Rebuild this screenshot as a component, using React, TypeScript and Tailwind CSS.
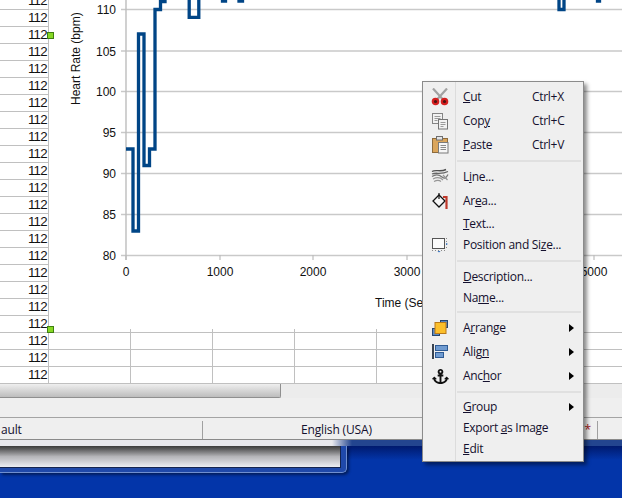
import { FaAnchor } from "react-icons/fa";

const SANS = "font-['Liberation_Sans',Arial,sans-serif]";
const UI = "font-['Open_Sans','Noto_Sans',sans-serif]";

const sheetRows = Array.from({ length: 23 }, (_, i) => i);
const cellCols = [0, 1, 2, 3, 4, 5, 6];

const LINE_PATH =
  "M126,149 H133 V231 H138.5 V34 H144 V165.5 H149.5 V149 H155 V9.5 H160.5 V1.5 H165 V-10 H189.2 V17.3 H198.8 V-10 H222.5 V1 H225.5 V-10 H239 V1 H242.5 V-10 H559 V9.5 H564 V-10 H597.5 V1 H599.5 V-10";

function Chart() {
  const yTicks = [
    { label: "110", y: 9.5 },
    { label: "105", y: 51 },
    { label: "100", y: 91.5 },
    { label: "95", y: 132.5 },
    { label: "90", y: 173.5 },
    { label: "85", y: 214.5 },
    { label: "80", y: 255.5 },
  ];
  const xTicks = [
    { label: "0", x: 126 },
    { label: "1000", x: 220 },
    { label: "2000", x: 313 },
    { label: "3000", x: 407 },
    { label: "5000", x: 594 },
  ];
  return (
    <svg width="573" height="329" viewBox="49 0 573 329" className="block shrink-0">
      {yTicks.map((t) => (
        <g key={t.label}>
          <line x1="121" x2="622" y1={t.y} y2={t.y} stroke="#c9c9c9" strokeWidth="1.4" />
          <text x="116" y={t.y + 4.5} textAnchor="end" fontSize="12" fontFamily="Liberation Sans" fill="#111">
            {t.label}
          </text>
        </g>
      ))}
      <line x1="126" x2="126" y1="0" y2="260" stroke="#bdbdbd" strokeWidth="1.4" />
      {xTicks.map((t) => (
        <g key={t.label}>
          <line x1={t.x} x2={t.x} y1="255" y2="260" stroke="#bdbdbd" strokeWidth="1.2" />
          <text x={t.x} y="276" textAnchor="middle" fontSize="12" fontFamily="Liberation Sans" fill="#111">
            {t.label}
          </text>
        </g>
      ))}
      <text x="375" y="307" fontSize="12" fontFamily="Liberation Sans" fill="#111">
        Time (Seconds)
      </text>
      <text
        transform="translate(80,105) rotate(-90)"
        fontSize="12"
        fontFamily="Liberation Sans"
        fill="#111"
      >
        Heart Rate (bpm)
      </text>
      <path d={LINE_PATH} fill="none" stroke="#004586" strokeWidth="3.3" strokeLinejoin="miter" />
    </svg>
  );
}

function ScissorsIcon() {
  return (
    <svg width="18" height="18" viewBox="0 0 18 18">
      <path d="M2 0.5 L11.5 11 M16 0.5 L6.5 11" stroke="#a2a2a2" strokeWidth="2.2" fill="none" />
      <circle cx="4.5" cy="13.5" r="2.7" fill="#4a1212" stroke="#d41f1f" strokeWidth="2.2" />
      <circle cx="13.5" cy="13.5" r="2.7" fill="#4a1212" stroke="#d41f1f" strokeWidth="2.2" />
    </svg>
  );
}

function CopyIcon() {
  return (
    <svg width="18" height="18" viewBox="0 0 18 18">
      <rect x="1.5" y="1.5" width="10" height="10" fill="#f2f2f2" stroke="#858585" />
      <path d="M3.5 4.5 H9.5 M3.5 6.5 H9.5 M3.5 8.5 H6.5" stroke="#9a9a9a" />
      <rect x="7.5" y="7.5" width="9" height="9.5" fill="#f2f2f2" stroke="#757575" />
      <path d="M9.5 10.5 H14.5 M9.5 12.5 H14.5 M9.5 14.5 H12.5" stroke="#9a9a9a" />
    </svg>
  );
}

function PasteIcon() {
  return (
    <svg width="18" height="18" viewBox="0 0 18 18">
      <rect x="1.5" y="2.5" width="15" height="14" fill="#dba65c" stroke="#8d6b3c" />
      <rect x="5.5" y="0.5" width="6" height="3.5" fill="#e4e4e4" stroke="#6f6f6f" />
      <rect x="7.5" y="6.5" width="9.5" height="10.5" fill="#f6f6f6" stroke="#7a7a7a" />
      <path d="M9.5 9.5 H15 M9.5 11.5 H15 M9.5 13.5 H15" stroke="#8a8a8a" />
    </svg>
  );
}

function LineIcon() {
  return (
    <svg width="18" height="18" viewBox="0 0 18 18">
      <path d="M1 3.5 C5 1 9 4.5 15 1.5" stroke="#4f4f4f" strokeWidth="1.4" fill="none" />
      <path d="M1 6 C5 4 10 7 17 3.5" stroke="#666" strokeWidth="1.3" fill="none" />
      <path d="M1 8.5 C4 6.5 8 6.5 11 9 S15 10 17 6.5" stroke="#777" strokeWidth="1.3" fill="none" />
      <path d="M2 11 C6 9 9 9 12 12 M12 7 L16.5 12 M3 13.5 C6 12 8 12 10 13.5" stroke="#969696" strokeWidth="1.2" fill="none" />
    </svg>
  );
}

function AreaIcon() {
  return (
    <svg width="18" height="18" viewBox="0 0 18 18">
      <path d="M8 3 L14 9 L8 15 L2 9 Z" fill="#f7f7f7" stroke="#111" strokeWidth="1.3" />
      <path d="M8 7 V1" stroke="#111" strokeWidth="1.2" />
      <path d="M12 5 H15.5 V17" fill="none" stroke="#c0392b" strokeWidth="2.2" />
    </svg>
  );
}

function PositionIcon() {
  return (
    <svg width="18" height="18" viewBox="0 0 18 18">
      <rect x="1.5" y="2.5" width="12" height="10" fill="#fbfbfb" stroke="#555" />
      <path d="M15.5 2 V13" stroke="#8a8a8a" strokeDasharray="1 2" />
      <path d="M1 14.5 H14" stroke="#8a8a8a" strokeDasharray="1 2" />
      <path d="M15 7 L17 8 L15 9 Z M6.5 15 H9.5 L8 16.5 Z" fill="#2f6fc0" />
    </svg>
  );
}

function ArrangeIcon() {
  return (
    <svg width="18" height="18" viewBox="0 0 18 18">
      <rect x="1.5" y="9.5" width="7" height="7" fill="#5c8ac2" stroke="#26466f" />
      <rect x="9.5" y="1.5" width="7" height="7" fill="#5c8ac2" stroke="#26466f" />
      <rect x="4" y="3.5" width="11" height="11" fill="#fbbf2b" stroke="#b9791a" />
    </svg>
  );
}

function AlignIcon() {
  return (
    <svg width="18" height="18" viewBox="0 0 18 18">
      <rect x="1" y="1" width="2" height="15" fill="#38424f" />
      <rect x="4.5" y="2.5" width="12" height="5" fill="#6f9bd1" stroke="#2f5b94" />
      <rect x="4.5" y="9.5" width="8" height="5" fill="#6f9bd1" stroke="#2f5b94" />
    </svg>
  );
}

function Arrow() {
  return <span className="ml-auto mr-[9px] h-0 w-0 border-y-[4px] border-l-[5px] border-y-transparent border-l-black" />;
}

function MenuItem({
  icon,
  shortcut,
  arrow,
  h,
  children,
}: {
  icon?: React.ReactNode;
  shortcut?: string;
  arrow?: boolean;
  h: string;
  children: React.ReactNode;
}) {
  return (
    <div className={`flex items-center ${h}`}>
      <span className="flex w-[33px] shrink-0 justify-center pl-px">{icon}</span>
      <span className="ml-[7px] whitespace-nowrap">{children}</span>
      {shortcut && <span className="absolute left-[109px] whitespace-nowrap">{shortcut}</span>}
      {arrow && <Arrow />}
    </div>
  );
}

function Separator({ h }: { h: string }) {
  return (
    <div className={`flex items-center ${h}`}>
      <div className="ml-[34px] mr-[2px] h-[2px] flex-1 bg-[#e0e0e0]" />
    </div>
  );
}

function ContextMenu() {
  return (
    <div
      className={`absolute left-[422px] top-[81px] h-[381px] w-[162px] border border-[#8b8b8b] bg-[#efefef] pt-[3px] text-[12px] leading-none tracking-[-0.3px] text-[#14102e] shadow-[3px_3px_4px_rgba(0,0,0,0.45)] ${UI}`}
    >
      <div className="absolute bottom-0 left-[32px] top-0 w-[1px] bg-[#dcdcdc]" />
      <div className="relative">
        <MenuItem h="h-[24px]" icon={<ScissorsIcon />} shortcut="Ctrl+X">
          <u>C</u>ut
        </MenuItem>
        <MenuItem h="h-[24px]" icon={<CopyIcon />} shortcut="Ctrl+C">
          Cop<u>y</u>
        </MenuItem>
        <MenuItem h="h-[24px]" icon={<PasteIcon />} shortcut="Ctrl+V">
          <u>P</u>aste
        </MenuItem>
        <Separator h="h-[8px]" />
        <MenuItem h="h-[24px]" icon={<LineIcon />}>
          L<u>i</u>ne...
        </MenuItem>
        <MenuItem h="h-[24px]" icon={<AreaIcon />}>
          Ar<u>e</u>a...
        </MenuItem>
        <MenuItem h="h-[21px]">
          <u>T</u>ext...
        </MenuItem>
        <MenuItem h="h-[22px]" icon={<PositionIcon />}>
          Position and Si<u>z</u>e...
        </MenuItem>
        <Separator h="h-[10px]" />
        <MenuItem h="h-[21px]">
          <u>D</u>escription...
        </MenuItem>
        <MenuItem h="h-[21px]">
          Na<u>m</u>e...
        </MenuItem>
        <Separator h="h-[8px]" />
        <MenuItem h="h-[24px]" icon={<ArrangeIcon />} arrow>
          A<u>r</u>range
        </MenuItem>
        <MenuItem h="h-[24px]" icon={<AlignIcon />} arrow>
          Alig<u>n</u>
        </MenuItem>
        <MenuItem h="h-[24px]" icon={<FaAnchor size={17} color="#111" />} arrow>
          Anc<u>h</u>or
        </MenuItem>
        <Separator h="h-[8px]" />
        <MenuItem h="h-[21px]" arrow>
          <u>G</u>roup
        </MenuItem>
        <MenuItem h="h-[21px]">
          Export <u>a</u>s Image
        </MenuItem>
        <MenuItem h="h-[21px]">
          <u>E</u>dit
        </MenuItem>
      </div>
    </div>
  );
}

function Handle({ className }: { className: string }) {
  return <div className={`absolute h-[7px] w-[7px] border border-[#3f7f10] bg-[#86d824] ${className}`} />;
}

export default function App() {
  return (
    <div className="relative h-[498px] w-[622px] overflow-hidden bg-[#0335a9]">
      <div className="flex h-[446px] flex-col bg-[#efefef]">
        {/* sheet + chart */}
        <div className="flex h-[384px] overflow-hidden bg-white">
          <div className={`-mt-[7px] w-[49px] shrink-0 text-[13.3px] tracking-[-0.7px] text-[#111] ${SANS}`}>
            {sheetRows.map((i) => (
              <div
                key={i}
                className="flex h-[17px] items-center justify-end border-r border-b border-[#c0c0c0] pr-px leading-none"
              >
                112
              </div>
            ))}
          </div>
          <div className="flex-1">
            <Chart />
            {["h-[4px]", "h-[17px]", "h-[17px]", "h-[17px]"].map((h, r) => (
              <div key={r} className={`flex border-b border-[#c0c0c0] ${h}`}>
                {cellCols.map((c) => (
                  <div key={c} className="w-[82px] shrink-0 border-r border-[#c0c0c0]" />
                ))}
              </div>
            ))}
          </div>
        </div>

        {/* horizontal scrollbar */}
        <div className="h-[14px] bg-[#ececec]">
          <div className="h-full w-[281px] rounded-br-[2px] border-r border-b border-[#8f8f8f] bg-gradient-to-b from-[#efefef] to-[#bdbdbd]" />
        </div>
        <div className="h-[20px] border-b border-[#a4a4a4]" />

        {/* status bar */}
        <div className={`flex h-[22px] items-center border-b border-[#8a8a8a] pt-[2px] text-[12px] tracking-[-0.15px] text-[#14102e] ${UI}`}>
          <div className="flex h-[18px] w-[203px] items-center border-r border-[#a0a0a0] pl-px">ault</div>
          <div className="pl-[98px]">English (USA)</div>
          <div className="ml-auto mr-[24px] flex h-[18px] items-center border-r border-[#a0a0a0] pr-[6px] text-[#a31515]">
            *
          </div>
        </div>

        <div className="h-[6px] bg-[linear-gradient(90deg,#e9e9ee_0,#e9e9ee_332px,#23458f_352px)]" />
      </div>

      {/* desktop below, with the window behind */}
      <div className="h-[52px] bg-[linear-gradient(180deg,#001a6e_0,#0335a9_14px)]">
        <div className="h-[27px] w-[347px] rounded-br-[5px] border-r border-b border-[#6f8fd0] bg-[#1f49aa] pr-[5px] shadow-[2px_2px_3px_rgba(0,0,0,0.45)]">
          <div className="h-[22px] border-r border-b border-[#14244f] bg-gradient-to-b from-[#3c3c3c] via-[#b4b4b8] to-[#eceef3]" />
        </div>
      </div>

      <Handle className="left-[47px] top-[32px]" />
      <Handle className="left-[47px] top-[326px]" />
      <ContextMenu />
    </div>
  );
}
